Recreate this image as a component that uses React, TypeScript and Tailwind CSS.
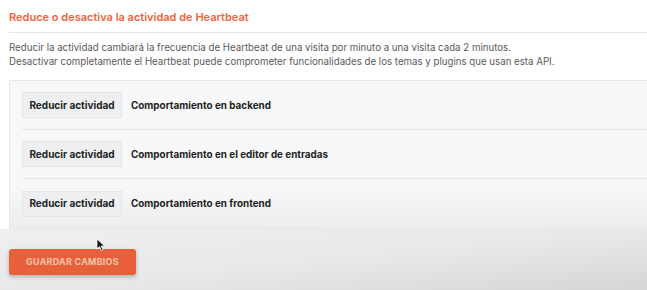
import React from "react";

const rows = [
  "Comportamiento en backend",
  "Comportamiento en el editor de entradas",
  "Comportamiento en frontend",
];

export default function App() {
  return (
    <div
      className="relative w-[647px] h-[290px] overflow-hidden bg-white"
      style={{ fontFamily: "Inter, 'Noto Sans', sans-serif" }}
    >
      <div className="pl-[9px]">
        <div className="pt-[9px] pb-[7px] text-[11px] font-semibold leading-[16px] text-[#f0643c]">
          Reduce o desactiva la actividad de Heartbeat
        </div>
        <div className="border-t border-[#e6e6e6] pt-[8px] pb-[11px] text-[9.7px] leading-[14px] text-[#5a5a5a]">
          <p>Reducir la actividad cambiará la frecuencia de Heartbeat de una visita por minuto a una visita cada 2 minutos.</p>
          <p>Desactivar completamente el Heartbeat puede comprometer funcionalidades de los temas y plugins que usan esta API.</p>
        </div>
        <div className="w-[660px] border-t border-l border-b border-[#e6e7e8] bg-gradient-to-b from-[#f7f8f9] from-70% to-[#eceded] pl-[12px]">
          {rows.map((r, i) => (
            <div
              key={r}
              className={
                "flex h-[49px] items-center gap-[9px] " +
                (i < rows.length - 1 ? "border-b border-[#e4e5e6]" : "")
              }
            >
              <div className="flex h-[26px] w-[100px] items-center justify-center border border-[#e4e5e6] bg-[#eeeff0] text-[10px] font-bold text-[#232323]">
                Reducir actividad
              </div>
              <div className="text-[9.9px] font-bold text-[#232323]">{r}</div>
            </div>
          ))}
        </div>
      </div>
      <div className="h-[63px] bg-gradient-to-br from-[#eeeff0] via-[#e8e9ea] to-[#d4d5d6] pl-[9px] pt-[20px]">
        <button className="flex h-[26px] w-[127px] items-center justify-center rounded-[3px] bg-[#e8603b] text-[8.9px] font-bold tracking-[0.3px] text-[#f5c6ab] shadow-[0_2px_4px_rgba(0,0,0,0.25)]">
          GUARDAR CAMBIOS
        </button>
      </div>
      <svg
        className="absolute left-[96px] top-[238px]"
        width="10"
        height="14"
        viewBox="0 0 10 14"
      >
        <path d="M1 1 L1 11 L3.5 8.6 L5.4 12.8 L7 12 L5.2 8 L8.6 8 Z" fill="#111" stroke="#fff" strokeWidth="0.8" />
      </svg>
    </div>
  );
}
